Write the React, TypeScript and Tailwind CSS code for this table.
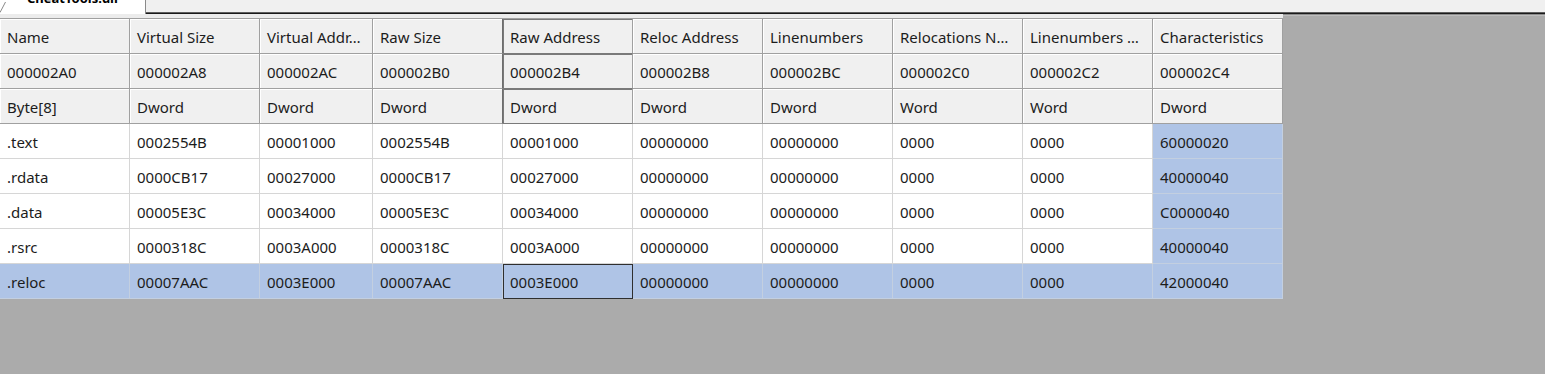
import React from "react";

type Row = string[];

const columns = [
  "Name",
  "Virtual Size",
  "Virtual Addr…",
  "Raw Size",
  "Raw Address",
  "Reloc Address",
  "Linenumbers",
  "Relocations N…",
  "Linenumbers …",
  "Characteristics",
];

const offsets = [
  "000002A0",
  "000002A8",
  "000002AC",
  "000002B0",
  "000002B4",
  "000002B8",
  "000002BC",
  "000002C0",
  "000002C2",
  "000002C4",
];

const types = ["Byte[8]", "Dword", "Dword", "Dword", "Dword", "Dword", "Dword", "Word", "Word", "Dword"];

const sections: Row[] = [
  [".text", "0002554B", "00001000", "0002554B", "00001000", "00000000", "00000000", "0000", "0000", "60000020"],
  [".rdata", "0000CB17", "00027000", "0000CB17", "00027000", "00000000", "00000000", "0000", "0000", "40000040"],
  [".data", "00005E3C", "00034000", "00005E3C", "00034000", "00000000", "00000000", "0000", "0000", "C0000040"],
  [".rsrc", "0000318C", "0003A000", "0000318C", "0003A000", "00000000", "00000000", "0000", "0000", "40000040"],
  [".reloc", "00007AAC", "0003E000", "00007AAC", "0003E000", "00000000", "00000000", "0000", "0000", "42000040"],
];

const SELECTED_ROW = 4;
const SELECTED_COL = 9;
const FOCUS_COL = 4;

function HeaderCell({ text, col }: { text: string; col: number }) {
  const pressed = col === FOCUS_COL;
  const beforePressed = col === FOCUS_COL - 1;
  return (
    <div
      className={
        "h-[35px] flex items-center pl-[7px] pt-[2px] bg-[#f0f0f0] border-b whitespace-nowrap overflow-hidden " +
        (pressed
          ? "border-b-[#7a7a7a] border-r border-r-[#a0a0a0] shadow-[inset_1px_1px_0_#7a7a7a]"
          : beforePressed
          ? "border-b-[#a0a0a0] border-r border-r-[#6e6e6e] shadow-[inset_1px_1px_0_#ffffff]"
          : "border-b-[#a0a0a0] border-r border-r-[#a0a0a0] shadow-[inset_1px_1px_0_#ffffff]")
      }
    >
      {text}
    </div>
  );
}

function DataCell({ text, row, col }: { text: string; row: number; col: number }) {
  const selected = row === SELECTED_ROW || col === SELECTED_COL;
  const focused = row === SELECTED_ROW && col === FOCUS_COL;
  return (
    <div
      className={
        "h-[35px] flex items-center pl-[7px] pt-[2px] border-r border-b whitespace-nowrap " +
        (selected ? "bg-[#afc4e6] border-[#c3cfe0] " : "bg-white border-[#d6d6d6] ") +
        (focused ? "outline outline-1 outline-[#2f2f2f] -outline-offset-1" : "")
      }
    >
      {text}
    </div>
  );
}

export default function App() {
  return (
    <div className="w-[1545px] h-[374px] overflow-hidden bg-[#ababab] font-['Noto_Sans',sans-serif] text-[15px] text-[#1c1c1c] leading-none">
      {/* document tab strip */}
      <div className="h-[14px] flex bg-[#f0f0f0]">
        <div className="relative w-[146px] h-[14px] bg-white border-r border-[#8a8a8a] overflow-hidden">
          <svg className="absolute left-0 top-0" width="8" height="14" viewBox="0 0 8 14">
            <path d="M0 12.5 L5.5 2" stroke="#8a8a8a" strokeWidth="1" fill="none" />
          </svg>
          <div className="absolute left-[27px] top-[-8px] text-[13px] font-bold text-black font-['Noto_Sans',sans-serif]">
            CheatTools.dll
          </div>
        </div>
        <div className="flex-1 flex flex-col justify-end">
          <div className="h-[1px] bg-[#5e5e5e]" />
          <div className="h-[1px] bg-[#1a1a1a]" />
        </div>
      </div>

      {/* section header grid */}
      <div className="flex">
        <div className="w-[1283px]">
          <div className="h-[5px] bg-[#ececec] border-b border-[#a0a0a0]" />
          <div className="grid grid-cols-[130px_130px_113px_130px_130px_130px_130px_130px_130px_130px]">
            {columns.map((c, i) => (
              <HeaderCell key={"h" + i} text={c} col={i} />
            ))}
            {offsets.map((c, i) => (
              <HeaderCell key={"o" + i} text={c} col={i} />
            ))}
            {types.map((c, i) => (
              <HeaderCell key={"t" + i} text={c} col={i} />
            ))}
            {sections.map((row, r) =>
              row.map((v, c) => <DataCell key={r + "-" + c} text={v} row={r} col={c} />)
            )}
          </div>
        </div>
        <div className="flex-1">
          <div className="h-[1px] bg-[#8c8c8c]" />
          <div className="h-[1px] bg-[#bdbdbd]" />
        </div>
      </div>
    </div>
  );
}
